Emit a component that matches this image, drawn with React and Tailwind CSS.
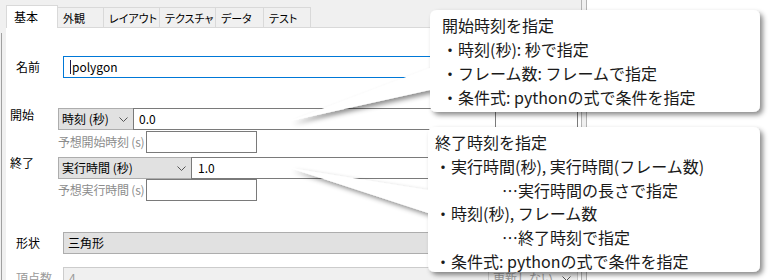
import React from 'react';

const tabs = [
  { label: '外観', w: 'w-[46px]' },
  { label: 'レイアウト', w: 'w-[56px]' },
  { label: 'テクスチャ', w: 'w-[56px]' },
  { label: 'データ', w: 'w-[48px]' },
  { label: 'テスト', w: 'w-[47px]' },
];

const Chevron = () => (
  <svg width="9" height="5" viewBox="0 0 9 5" className="shrink-0">
    <polyline points="0.5,0.5 4.5,4.5 8.5,0.5" fill="none" stroke="#555" strokeWidth="1" />
  </svg>
);

const Dropdown = ({ text, w }) => (
  <div className={`${w} shrink-0 h-full flex items-center justify-between pl-[3px] pr-[5px] bg-[#e1e1e1] border border-[#adadad] whitespace-nowrap`}>
    <span>{text}</span>
    <Chevron />
  </div>
);

const Callouts = () => (
  <>
    <svg className="absolute inset-0" width="780" height="280" viewBox="0 0 780 280">
      <defs>
        <filter id="sh" x="-10%" y="-10%" width="130%" height="130%">
          <feDropShadow dx="3" dy="3" stdDeviation="2.5" floodColor="#000" floodOpacity="0.45" />
        </filter>
      </defs>
      <g filter="url(#sh)" fill="#fff">
        <path d="M437 10 H753 Q760 10 760 17 V105 Q760 112 753 112 H437 Q430 112 430 105 V90 L290 121 L430 68 V17 Q430 10 437 10 Z" />
        <path d="M435 127 H753 Q760 127 760 134 V265 Q760 272 753 272 H435 Q428 272 428 265 V213 L290 168 L428 190 V134 Q428 127 435 127 Z" />
      </g>
    </svg>

    <div className="absolute left-[442px] top-[13px] text-[16px] leading-[24px] text-[#1a1a1a] whitespace-nowrap">
      <div>開始時刻を指定</div>
      <div>・時刻(秒): 秒で指定</div>
      <div>・フレーム数: フレームで指定</div>
      <div>・条件式: pythonの式で条件を指定</div>
    </div>

    <div className="absolute left-[435px] top-[131px] text-[16px] leading-[23.8px] text-[#1a1a1a] whitespace-nowrap">
      <div>終了時刻を指定</div>
      <div>・実行時間(秒), 実行時間(フレーム数)</div>
      <div className="pl-[67px]">…実行時間の長さで指定</div>
      <div>・時刻(秒), フレーム数</div>
      <div className="pl-[67px]">…終了時刻で指定</div>
      <div>・条件式: pythonの式で条件を指定</div>
    </div>
  </>
);

export default function App() {
  return (
    <div className="relative w-[780px] h-[280px] overflow-hidden bg-white text-[12px] text-black font-['Noto_Sans_CJK_JP','Noto_Sans',sans-serif]">
      <div className="flex h-full">
        {/* left gutter */}
        <div className="w-[6px] h-full bg-[#f0f0f0] pt-[33px]">
          <div className="ml-[1px] w-px h-full bg-[#a0a0a0]" />
        </div>

        {/* form panel */}
        <div className="w-[575px] h-full flex flex-col">
          <div className="h-[28px] shrink-0 flex items-end bg-[#f0f0f0] border-b border-[#d9d9d9] whitespace-nowrap">
            <div className="relative z-10 -mb-px w-[52px] h-[23px] bg-white border border-b-0 border-[#d9d9d9] pl-[7px] pt-[3px] leading-[16px]">
              基本
            </div>
            {tabs.map((t) => (
              <div
                key={t.label}
                className={`${t.w} h-[20px] bg-[#f0f0f0] border-t border-r border-[#d9d9d9] pl-[5px] pt-[2px] text-[11px] leading-[16px] [font-feature-settings:'palt'] overflow-hidden`}
              >
                {t.label}
              </div>
            ))}
          </div>

          <div className="flex-1 bg-white flex flex-col whitespace-nowrap">
            {/* name */}
            <div className="mt-[28px] h-[22px] flex">
              <span className="w-[57px] shrink-0 pl-[10px] flex items-center">名前</span>
              <div className="flex-1 mr-[3px] border border-[#0078d7] flex items-center pl-[6px]">
                <span className="w-px h-[14px] bg-[#1a1a4a] mr-px" />
                polygon
              </div>
            </div>

            {/* start */}
            <div className="mt-[30px] flex">
              <span className="w-[52px] shrink-0 pl-[4px] pt-[1px] leading-[12px]">開始</span>
              <div className="flex-1 mr-[3px] flex flex-col">
                <div className="h-[22px] flex">
                  <Dropdown text="時刻 (秒)" w="w-[76px]" />
                  <div className="w-[363px] shrink-0 -ml-px border border-[#7a7a7a] flex items-center pl-[5px]">0.0</div>
                  <div className="flex-1 -ml-px border border-[#7a7a7a]" />
                </div>
                <div className="mt-px h-[22px] flex">
                  <span className="w-[88px] shrink-0 flex items-center text-[#8c8c8c] tracking-[-0.2px]">予想開始時刻 (s)</span>
                  <div className="w-[111px] border border-[#7a7a7a]" />
                </div>
              </div>
            </div>

            {/* end */}
            <div className="mt-[4px] flex">
              <span className="w-[52px] shrink-0 pl-[4px] leading-[12px]">終了</span>
              <div className="flex-1 mr-[3px] flex flex-col">
                <div className="h-[22px] flex">
                  <Dropdown text="実行時間 (秒)" w="w-[134px]" />
                  <div className="flex-1 -ml-px border border-[#7a7a7a] flex items-center pl-[6px]">1.0</div>
                </div>
                <div className="h-[22px] flex">
                  <span className="w-[88px] shrink-0 flex items-center text-[#8c8c8c] tracking-[-0.2px]">予想実行時間 (s)</span>
                  <div className="w-[111px] border border-[#7a7a7a]" />
                </div>
              </div>
            </div>

            {/* shape */}
            <div className="mt-[31px] h-[22px] flex">
              <span className="w-[57px] shrink-0 pl-[10px] flex items-center">形状</span>
              <div className="flex-1 mr-[3px] bg-[#e1e1e1] border border-[#adadad] flex items-center pl-[4px]">三角形</div>
            </div>

            {/* vertex count */}
            <div className="mt-[13px] h-[22px] flex">
              <span className="w-[57px] shrink-0 pl-[10px] flex items-center text-[#9a9a9a]">頂点数</span>
              <div className="w-[426px] shrink-0 bg-[#f0f0f0] border border-[#cccccc] flex items-center pl-[5px] text-[#9a9a9a]">4</div>
              <div className="flex-1 mr-[3px] -ml-px bg-[#f0f0f0] border border-[#cccccc] flex items-center justify-between pl-[4px] pr-[6px] text-[#9a9a9a]">
                <span>更新しない</span>
                <Chevron />
              </div>
            </div>
          </div>
        </div>

        {/* splitter */}
        <div className="w-[6px] h-full bg-[#f0f0f0] border-l border-r border-[#b4b4b4]" />

        <div className="flex-1 h-full bg-white" />
      </div>

      <Callouts />
    </div>
  );
}
